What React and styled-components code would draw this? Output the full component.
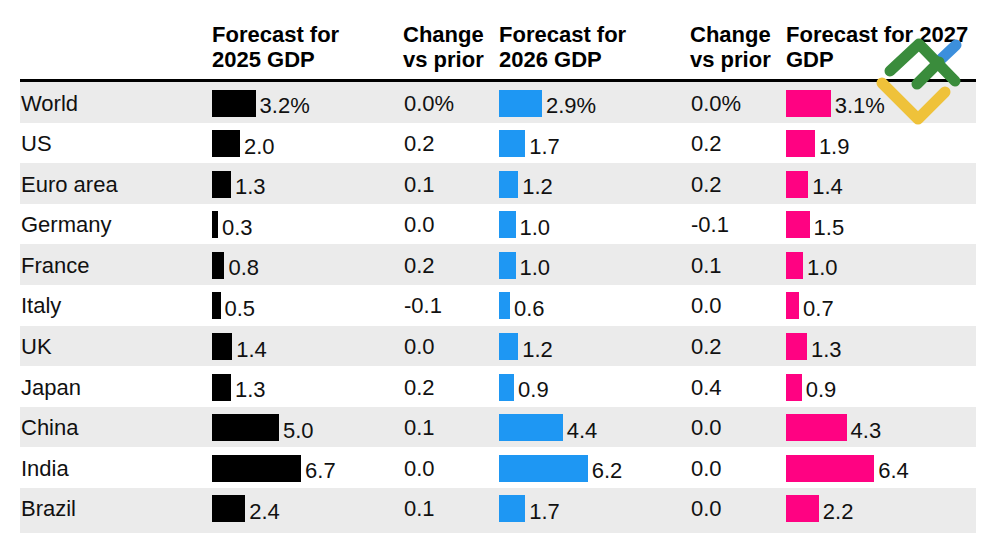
import styled, { createGlobalStyle } from "styled-components";

const GlobalStyle = createGlobalStyle`
  body {
    margin: 0;
    background: #fff;
    font-family: "Liberation Sans", Arial, sans-serif;
    color: #111;
  }
`;

// bar widths are roughly linear, each column with its own scale
const SCALES = [
  { color: "#000000", k: 13, b: 2 },
  { color: "#1e97f3", k: 13.9, b: 2.6 },
  { color: "#ff0282", k: 13.2, b: 3.8 },
];

const ROWS = [
  ["World", ["3.2%", 3.2], "0.0%", ["2.9%", 2.9], "0.0%", ["3.1%", 3.1]],
  ["US", ["2.0", 2.0], "0.2", ["1.7", 1.7], "0.2", ["1.9", 1.9]],
  ["Euro area", ["1.3", 1.3], "0.1", ["1.2", 1.2], "0.2", ["1.4", 1.4]],
  ["Germany", ["0.3", 0.3], "0.0", ["1.0", 1.0], "-0.1", ["1.5", 1.5]],
  ["France", ["0.8", 0.8], "0.2", ["1.0", 1.0], "0.1", ["1.0", 1.0]],
  ["Italy", ["0.5", 0.5], "-0.1", ["0.6", 0.6], "0.0", ["0.7", 0.7]],
  ["UK", ["1.4", 1.4], "0.0", ["1.2", 1.2], "0.2", ["1.3", 1.3]],
  ["Japan", ["1.3", 1.3], "0.2", ["0.9", 0.9], "0.4", ["0.9", 0.9]],
  ["China", ["5.0", 5.0], "0.1", ["4.4", 4.4], "0.0", ["4.3", 4.3]],
  ["India", ["6.7", 6.7], "0.0", ["6.2", 6.2], "0.0", ["6.4", 6.4]],
  ["Brazil", ["2.4", 2.4], "0.1", ["1.7", 1.7], "0.0", ["2.2", 2.2]],
];

function BarValue({ data, scale }) {
  const [label, v] = data;
  return (
    <BarCell>
      <Bar $color={scale.color} style={{ width: scale.b + scale.k * v }} />
      <Value>{label}</Value>
    </BarCell>
  );
}

function Logo() {
  return (
    <LogoSvg viewBox="874 34 96 96" width="96" height="96">
      <g fill="none" strokeWidth="11" strokeLinecap="round" strokeLinejoin="round">
        <path d="M882 83 L918 119 L945 92" stroke="#efc23a" />
        <path d="M938 62 L956 45" stroke="#3c8fdc" />
        <path d="M890 71 L919 44 L955 81" stroke="#3a8c3c" />
        <path d="M917 84 L939 62" stroke="#3a8c3c" />
      </g>
    </LogoSvg>
  );
}

export default function App() {
  return (
    <Page>
      <GlobalStyle />
      <Table>
        <HeaderRow>
          <HeadCell />
          <HeadCell>Forecast for<br />2025 GDP</HeadCell>
          <HeadCell>Change<br />vs prior</HeadCell>
          <HeadCell>Forecast for<br />2026 GDP</HeadCell>
          <HeadCell>Change<br />vs prior</HeadCell>
          <HeadCell>Forecast for 2027<br />GDP</HeadCell>
        </HeaderRow>
        {ROWS.map((r, i) => (
          <Row key={r[0]} $shaded={i % 2 === 0} $last={i === ROWS.length - 1}>
            <Label>{r[0]}</Label>
            <BarValue data={r[1]} scale={SCALES[0]} />
            <Label>{r[2]}</Label>
            <BarValue data={r[3]} scale={SCALES[1]} />
            <Label>{r[4]}</Label>
            <BarValue data={r[5]} scale={SCALES[2]} />
          </Row>
        ))}
      </Table>
      <Logo />
    </Page>
  );
}

const Page = styled.div`
  position: relative;
  width: 1000px;
  height: 545px;
  padding: 22px 0 0 20px;
  box-sizing: border-box;
  overflow: hidden;
`;

const Table = styled.div`
  width: 956px;
  display: flex;
  flex-direction: column;
`;

const grid = `
  display: grid;
  grid-template-columns: 192px 191px 96px 191px 96px 190px;
`;

const HeaderRow = styled.div`
  ${grid}
  padding-bottom: 7px;
  border-bottom: 3px solid #000;
`;

const HeadCell = styled.div`
  font-size: 22px;
  line-height: 25px;
  font-weight: 700;
  color: #000;
  white-space: nowrap;
`;

const Row = styled.div`
  ${grid}
  align-items: start;
  height: ${({ $last }) => ($last ? "45px" : "40.6px")};
  background: ${({ $shaded }) => ($shaded ? "#ebebeb" : "#fff")};
`;

const Label = styled.div`
  font-size: 22px;
  line-height: 25px;
  margin-top: 8.5px;
  padding-left: 1px;
  white-space: nowrap;
`;

const BarCell = styled.div`
  display: flex;
  align-items: flex-start;
`;

const Bar = styled.div`
  height: 27px;
  margin-top: 7.5px;
  background: ${({ $color }) => $color};
  flex: none;
`;

const Value = styled.div`
  font-size: 22px;
  line-height: 25px;
  margin: 11px 0 0 4px;
  white-space: nowrap;
`;

const LogoSvg = styled.svg`
  position: absolute;
  left: 874px;
  top: 34px;
`;
